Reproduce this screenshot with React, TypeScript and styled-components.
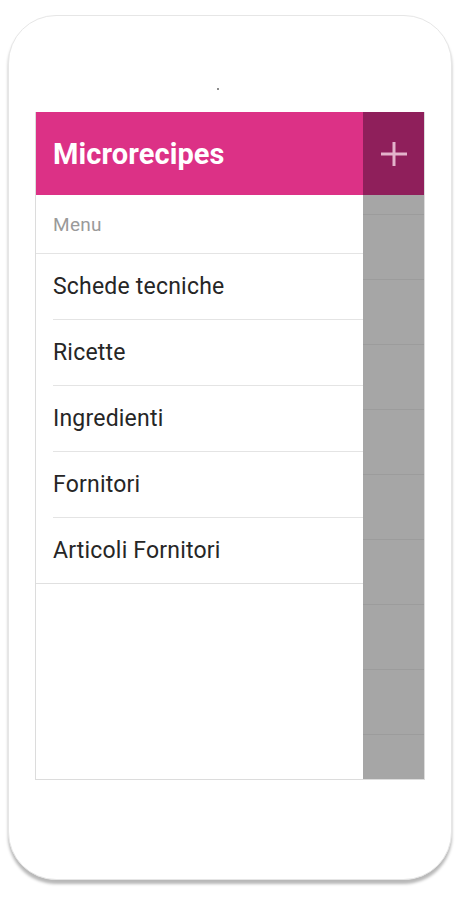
import React from 'react';
import styled, { createGlobalStyle } from 'styled-components';

const GlobalStyle = createGlobalStyle`
  html, body {
    margin: 0;
    padding: 0;
    background: #fff;
    font-family: Roboto, "Liberation Sans", Arial, sans-serif;
  }
`;

const Page = styled.div`
  width: 475px;
  height: 900px;
  padding: 15px 0 0 8px;
  box-sizing: border-box;
`;

const Phone = styled.div`
  width: 444px;
  height: 865px;
  box-sizing: border-box;
  border: 1px solid #e6e6e6;
  border-radius: 48px;
  background: #fff;
  box-shadow: 0 4px 3px rgba(0, 0, 0, 0.28);
  display: flex;
  flex-direction: column;
  align-items: center;
  padding-top: 72px;
`;

const Speaker = styled.div`
  width: 2px;
  height: 2px;
  border-radius: 1px;
  background: #666;
  margin-bottom: 22px;
  margin-right: 24px;
`;

const Screen = styled.div`
  width: 390px;
  height: 668px;
  box-sizing: border-box;
  border: 1px solid #dcdcdc;
  border-top: none;
  display: flex;
  flex-direction: row;
  background: #fff;
`;

const Drawer = styled.div`
  width: 327px;
  display: flex;
  flex-direction: column;
`;

const Header = styled.div`
  height: 83px;
  background: #dc3186;
  display: flex;
  align-items: center;
  padding-left: 17px;
  color: #fff;
  font-size: 29px;
  font-weight: 700;
  letter-spacing: 0.1px;
`;

const Section = styled.div`
  height: 58px;
  display: flex;
  align-items: center;
  padding-left: 17px;
  color: #9a9a9a;
  font-size: 19px;
  letter-spacing: 0.3px;
  border-bottom: 1px solid #e4e4e4;
`;

const List = styled.div`
  display: flex;
  flex-direction: column;
  border-bottom: 1px solid #e0e0e0;
`;

const Item = styled.div<{ $last?: boolean }>`
  height: 65px;
  margin-left: 17px;
  display: flex;
  align-items: center;
  color: #262626;
  font-size: 23px;
  letter-spacing: 0.2px;
  border-bottom: ${(p) => (p.$last ? 'none' : '1px solid #e4e4e4')};
`;

const Scrim = styled.div`
  flex: 1;
  display: flex;
  flex-direction: column;
  background: #a6a6a6;
`;

const AddButton = styled.div`
  height: 83px;
  background: #8f1f5b;
  display: flex;
  align-items: center;
  justify-content: center;
`;

const ScrimRow = styled.div<{ $first?: boolean }>`
  height: ${(p) => (p.$first ? '19px' : '64px')};
  border-bottom: 1px solid #9c9c9c;
`;

const items = [
  'Schede tecniche',
  'Ricette',
  'Ingredienti',
  'Fornitori',
  'Articoli Fornitori',
];

export default function App() {
  return (
    <>
      <GlobalStyle />
      <Page>
        <Phone>
          <Speaker />
          <Screen>
            <Drawer>
              <Header>Microrecipes</Header>
              <Section>Menu</Section>
              <List>
                {items.map((label, i) => (
                  <Item key={label} $last={i === items.length - 1}>
                    {label}
                  </Item>
                ))}
              </List>
            </Drawer>
            <Scrim>
              <AddButton>
                <svg width="28" height="26" viewBox="0 0 28 26">
                  <line x1="14" y1="1" x2="14" y2="25" stroke="#e3b3cb" strokeWidth="3" />
                  <line x1="1" y1="13" x2="27" y2="13" stroke="#e3b3cb" strokeWidth="3" />
                </svg>
              </AddButton>
              <ScrimRow $first />
              {Array.from({ length: 8 }).map((_, i) => (
                <ScrimRow key={i} />
              ))}
            </Scrim>
          </Screen>
        </Phone>
      </Page>
    </>
  );
}
